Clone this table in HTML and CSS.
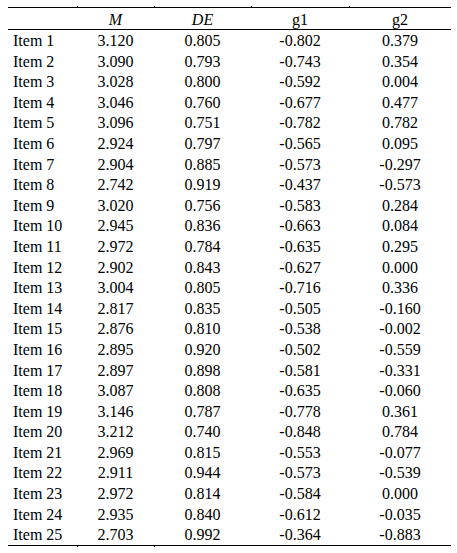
FILE: index.html
```html
<!DOCTYPE html>
<html>
<head>
<meta charset="utf-8">
<link rel="stylesheet" href="styles.css">
</head>
<body>
<div class="wrap">
  <div class="ticks"><span></span><span class="t"></span><span class="t"></span><span class="t"></span><span class="t"></span></div>
  <table class="stats">
    <colgroup><col class="c1"><col class="c2"><col class="c3"><col class="c4"><col class="c5"></colgroup>
    <thead>
      <tr><th></th><th><i>M</i></th><th><i>DE</i></th><th>g1</th><th>g2</th></tr>
    </thead>
    <tbody>
      <tr><td>Item 1</td><td>3.120</td><td>0.805</td><td>-0.802</td><td>0.379</td></tr>
      <tr><td>Item 2</td><td>3.090</td><td>0.793</td><td>-0.743</td><td>0.354</td></tr>
      <tr><td>Item 3</td><td>3.028</td><td>0.800</td><td>-0.592</td><td>0.004</td></tr>
      <tr><td>Item 4</td><td>3.046</td><td>0.760</td><td>-0.677</td><td>0.477</td></tr>
      <tr><td>Item 5</td><td>3.096</td><td>0.751</td><td>-0.782</td><td>0.782</td></tr>
      <tr><td>Item 6</td><td>2.924</td><td>0.797</td><td>-0.565</td><td>0.095</td></tr>
      <tr><td>Item 7</td><td>2.904</td><td>0.885</td><td>-0.573</td><td>-0.297</td></tr>
      <tr><td>Item 8</td><td>2.742</td><td>0.919</td><td>-0.437</td><td>-0.573</td></tr>
      <tr><td>Item 9</td><td>3.020</td><td>0.756</td><td>-0.583</td><td>0.284</td></tr>
      <tr><td>Item 10</td><td>2.945</td><td>0.836</td><td>-0.663</td><td>0.084</td></tr>
      <tr><td>Item 11</td><td>2.972</td><td>0.784</td><td>-0.635</td><td>0.295</td></tr>
      <tr><td>Item 12</td><td>2.902</td><td>0.843</td><td>-0.627</td><td>0.000</td></tr>
      <tr><td>Item 13</td><td>3.004</td><td>0.805</td><td>-0.716</td><td>0.336</td></tr>
      <tr><td>Item 14</td><td>2.817</td><td>0.835</td><td>-0.505</td><td>-0.160</td></tr>
      <tr><td>Item 15</td><td>2.876</td><td>0.810</td><td>-0.538</td><td>-0.002</td></tr>
      <tr><td>Item 16</td><td>2.895</td><td>0.920</td><td>-0.502</td><td>-0.559</td></tr>
      <tr><td>Item 17</td><td>2.897</td><td>0.898</td><td>-0.581</td><td>-0.331</td></tr>
      <tr><td>Item 18</td><td>3.087</td><td>0.808</td><td>-0.635</td><td>-0.060</td></tr>
      <tr><td>Item 19</td><td>3.146</td><td>0.787</td><td>-0.778</td><td>0.361</td></tr>
      <tr><td>Item 20</td><td>3.212</td><td>0.740</td><td>-0.848</td><td>0.784</td></tr>
      <tr><td>Item 21</td><td>2.969</td><td>0.815</td><td>-0.553</td><td>-0.077</td></tr>
      <tr><td>Item 22</td><td>2.911</td><td>0.944</td><td>-0.573</td><td>-0.539</td></tr>
      <tr><td>Item 23</td><td>2.972</td><td>0.814</td><td>-0.584</td><td>0.000</td></tr>
      <tr><td>Item 24</td><td>2.935</td><td>0.840</td><td>-0.612</td><td>-0.035</td></tr>
      <tr><td>Item 25</td><td>2.703</td><td>0.992</td><td>-0.364</td><td>-0.883</td></tr>
    </tbody>
  </table>
  <div class="ticks bottom"><span></span><span class="t"></span><span class="t"></span></div>
</div>
</body>
</html>
```

FILE: styles.css
```css
html, body {
  margin: 0;
  padding: 0;
  background: #ffffff;
}
body {
  font-family: "Liberation Serif", "Times New Roman", serif;
  font-size: 16px;
  color: #000000;
}
.wrap {
  padding: 6px 0 0 8px;
  width: 443px;
}
.ticks {
  display: grid;
  grid-template-columns: 69px 77px 97px 98px 102px;
  height: 1px;
}
.ticks .t {
  border-left: 1px solid #000;
  height: 1px;
}
.stats {
  border-collapse: collapse;
  table-layout: fixed;
  width: 443px;
  border-top: 1px solid #000;
  border-bottom: 1px solid #000;
}
.c1 { width: 69px; }
.c2 { width: 77px; }
.c3 { width: 97px; }
.c4 { width: 98px; }
.c5 { width: 102px; }
.stats th {
  font-weight: normal;
  text-align: center;
  height: 21px;
  box-sizing: border-box;
  padding: 2px 0 0 0;
  line-height: 19px;
  border-bottom: 1px solid #000;
}
.stats td {
  text-align: center;
  height: 20.6px;
  box-sizing: border-box;
  padding: 2px 0 0 0;
  line-height: 18.6px;
  white-space: nowrap;
}
.stats td:first-child {
  text-align: left;
  padding-left: 5px;
}
```
